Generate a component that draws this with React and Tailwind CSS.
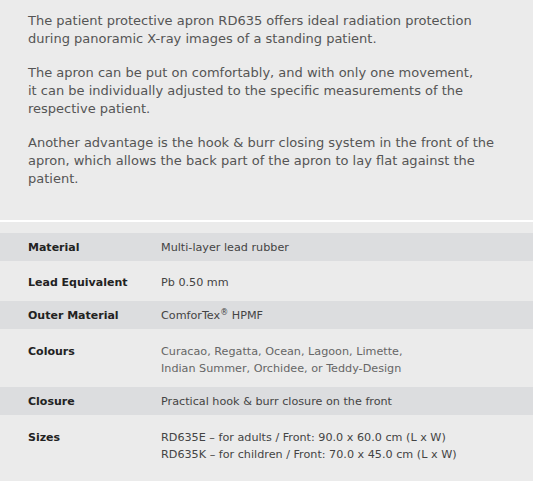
const specs = [
  { label: 'Material', value: ['Multi-layer lead rubber'], shaded: true },
  { label: 'Lead Equivalent', value: ['Pb 0.50 mm'] },
  { label: 'Outer Material', value: [<>ComforTex<sup className="text-[8px]">®</sup> HPMF</>], shaded: true },
  { label: 'Colours', value: ['Curacao, Regatta, Ocean, Lagoon, Limette,', 'Indian Summer, Orchidee, or Teddy-Design'], light: true },
  { label: 'Closure', value: ['Practical hook & burr closure on the front'], shaded: true },
  { label: 'Sizes', value: ['RD635E – for adults / Front: 90.0 x 60.0 cm (L x W)', 'RD635K – for children / Front: 70.0 x 45.0 cm (L x W)'] },
]

const App = () => {
  return (
    <div className="w-[533px] h-[481px] overflow-hidden bg-[#ebebeb] font-['DejaVu_Sans',Verdana,sans-serif]">
      {/* description */}
      <div className="px-[28px] pt-[12px] h-[220px] text-[13px] leading-[18px] text-[#555] flex flex-col gap-[16px]">
        <p>The patient protective apron RD635 offers ideal radiation protection during panoramic X-ray images of a standing patient.</p>
        <p>The apron can be put on comfortably, and with only one movement,<br />it can be individually adjusted to the specific measurements of the respective patient.</p>
        <p>Another advantage is the hook &amp; burr closing system in the front of the apron, which allows the back part of the apron to lay flat against the patient.</p>
      </div>
      <div className="h-[2px] bg-white" />

      {/* spec table */}
      <div className="pt-[11px] text-[11.2px] leading-[17px]">
        {specs.map((row) => (
          <div
            key={row.label}
            className={
              row.shaded
                ? 'flex bg-[#dcdddf] py-[5.5px]'
                : row.value.length > 1
                  ? 'flex pt-[14px] pb-[10px]'
                  : 'flex pt-[12.5px] pb-[10.5px]'
            }
          >
            <div className="w-[161px] pl-[28px] font-bold text-[#222] shrink-0 text-[11px]">{row.label}</div>
            <div className={row.light ? 'text-[#666]' : 'text-[#444]'}>
              {row.value.map((line, i) => (
                <div key={i}>{line}</div>
              ))}
            </div>
          </div>
        ))}
      </div>
    </div>
  )
}

export default App
